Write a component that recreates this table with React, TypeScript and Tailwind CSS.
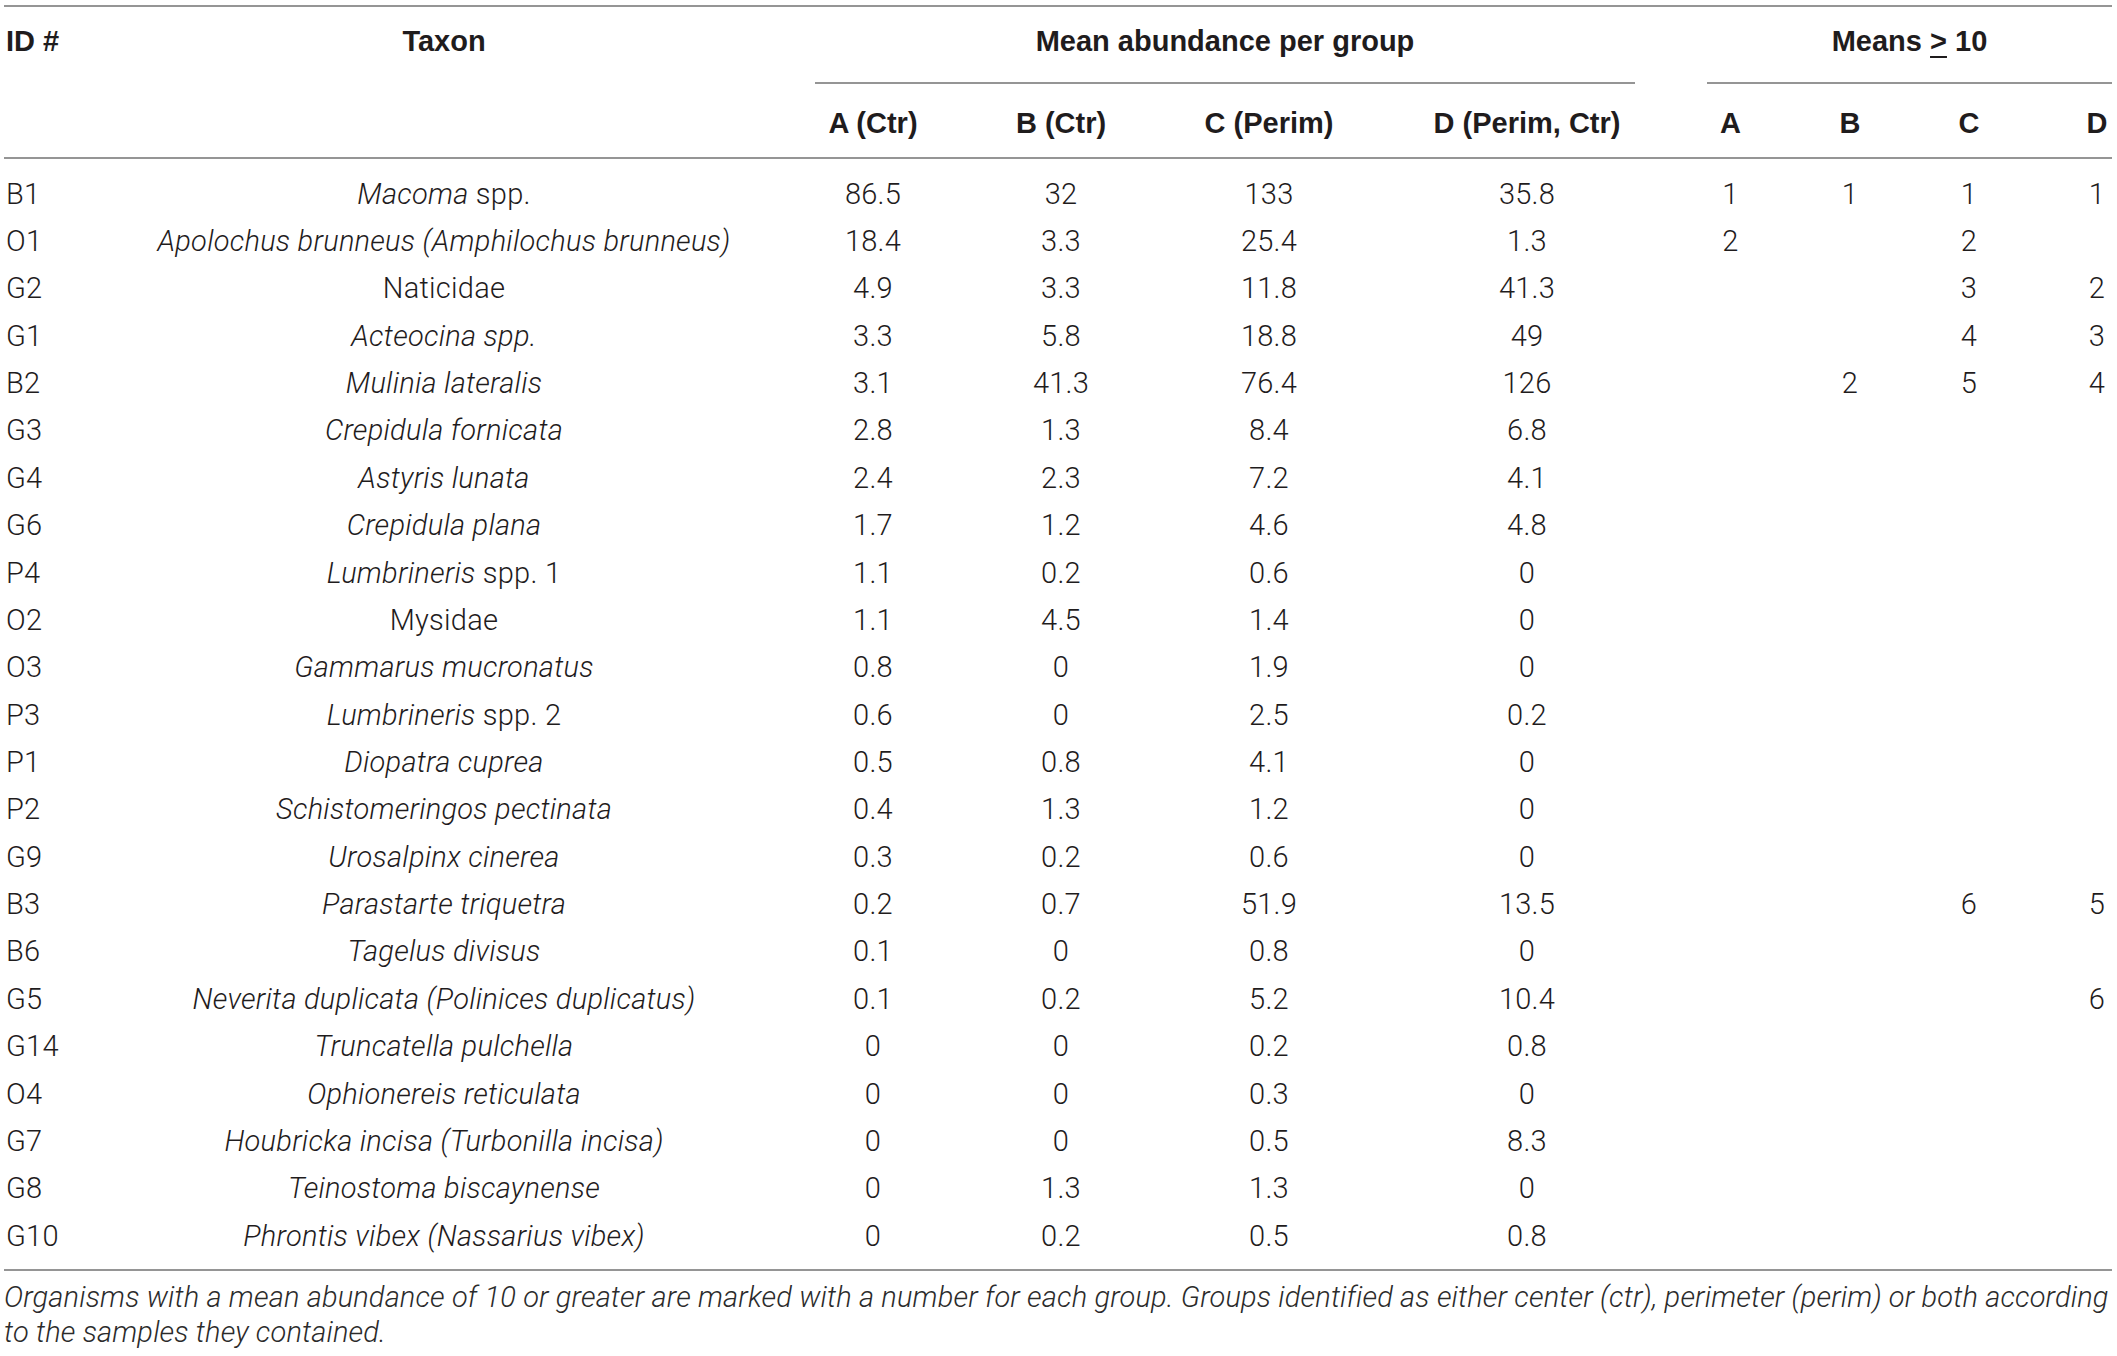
import type { ReactNode } from "react";

const grid = "grid grid-cols-[105px_670px_188px_198px_233px_273px_119px_120px_123px_79px]";

// per-column alignment, padding shifts the centre the way the table cells do
const cell = [
  "pl-[2px] text-left",
  "text-center",
  "text-center",
  "text-center pr-[10px]",
  "text-center pr-[25px]",
  "text-center pr-[15px]",
  "text-center",
  "text-center",
  "text-center pr-[5px]",
  "text-center pl-[49px]",
];

type Row = [string, ReactNode, string, string, string, string, string, string, string, string];

const I = ({ children }: { children: ReactNode }) => <span className="italic">{children}</span>;

const rows: Row[] = [
  ["B1", <><I>Macoma</I> spp.</>, "86.5", "32", "133", "35.8", "1", "1", "1", "1"],
  ["O1", <I>Apolochus brunneus (Amphilochus brunneus)</I>, "18.4", "3.3", "25.4", "1.3", "2", "", "2", ""],
  ["G2", "Naticidae", "4.9", "3.3", "11.8", "41.3", "", "", "3", "2"],
  ["G1", <I>Acteocina spp.</I>, "3.3", "5.8", "18.8", "49", "", "", "4", "3"],
  ["B2", <I>Mulinia lateralis</I>, "3.1", "41.3", "76.4", "126", "", "2", "5", "4"],
  ["G3", <I>Crepidula fornicata</I>, "2.8", "1.3", "8.4", "6.8", "", "", "", ""],
  ["G4", <I>Astyris lunata</I>, "2.4", "2.3", "7.2", "4.1", "", "", "", ""],
  ["G6", <I>Crepidula plana</I>, "1.7", "1.2", "4.6", "4.8", "", "", "", ""],
  ["P4", <><I>Lumbrineris</I> spp. 1</>, "1.1", "0.2", "0.6", "0", "", "", "", ""],
  ["O2", "Mysidae", "1.1", "4.5", "1.4", "0", "", "", "", ""],
  ["O3", <I>Gammarus mucronatus</I>, "0.8", "0", "1.9", "0", "", "", "", ""],
  ["P3", <><I>Lumbrineris</I> spp. 2</>, "0.6", "0", "2.5", "0.2", "", "", "", ""],
  ["P1", <I>Diopatra cuprea</I>, "0.5", "0.8", "4.1", "0", "", "", "", ""],
  ["P2", <I>Schistomeringos pectinata</I>, "0.4", "1.3", "1.2", "0", "", "", "", ""],
  ["G9", <I>Urosalpinx cinerea</I>, "0.3", "0.2", "0.6", "0", "", "", "", ""],
  ["B3", <I>Parastarte triquetra</I>, "0.2", "0.7", "51.9", "13.5", "", "", "6", "5"],
  ["B6", <I>Tagelus divisus</I>, "0.1", "0", "0.8", "0", "", "", "", ""],
  ["G5", <I>Neverita duplicata (Polinices duplicatus)</I>, "0.1", "0.2", "5.2", "10.4", "", "", "", "6"],
  ["G14", <I>Truncatella pulchella</I>, "0", "0", "0.2", "0.8", "", "", "", ""],
  ["O4", <I>Ophionereis reticulata</I>, "0", "0", "0.3", "0", "", "", "", ""],
  ["G7", <I>Houbricka incisa (Turbonilla incisa)</I>, "0", "0", "0.5", "8.3", "", "", "", ""],
  ["G8", <I>Teinostoma biscaynense</I>, "0", "1.3", "1.3", "0", "", "", "", ""],
  ["G10", <I>Phrontis vibex (Nassarius vibex)</I>, "0", "0.2", "0.5", "0.8", "", "", "", ""],
];

const subHeads = ["", "", "A (Ctr)", "B (Ctr)", "C (Perim)", "D (Perim, Ctr)", "A", "B", "C", "D"];

const App = () => {
  return (
    <div className="min-h-screen bg-white text-[#1f1c1d]">
      <div className="w-[2108px] ml-[4px] pt-[5px]">
        <div className="border-t-2 border-[#959595]">
          {/* header */}
          <div className="font-['Liberation_Sans',Arial,sans-serif] font-bold text-[29px] leading-[34px]">
            <div className={grid}>
              <div className={`${cell[0]} pt-[17px]`}>ID #</div>
              <div className={`${cell[1]} pt-[17px]`}>Taxon</div>
              <div className="col-span-4 pt-[17px]">
                <div className="ml-[36px] mr-[36px] pb-[24px] border-b-2 border-[#959595] text-center">
                  Mean abundance per group
                </div>
              </div>
              <div className="col-span-4 pt-[17px]">
                <div className="ml-[36px] pb-[24px] border-b-2 border-[#959595] text-center">
                  Means <span className="underline underline-offset-[5px] decoration-2">&gt;</span> 10
                </div>
              </div>
            </div>
            <div className={`${grid} pt-[22px] pb-[17px] border-b-2 border-[#959595]`}>
              {subHeads.map((h, i) => (
                <div key={i} className={cell[i]}>
                  {h}
                </div>
              ))}
            </div>
          </div>

          {/* body */}
          <div className="font-['Roboto',Arial,sans-serif] font-light text-[29px] tracking-[0.25px] pt-[11px] pb-[10px] border-b-2 border-[#959595]">
            {rows.map((r) => (
              <div key={r[0]} className={`${grid} h-[47.36px] items-center leading-[34px]`}>
                {r.map((v, i) => (
                  <div key={i} className={`${cell[i]} whitespace-nowrap`}>
                    {v}
                  </div>
                ))}
              </div>
            ))}
          </div>

          {/* footnote */}
          <div className="pt-[9px] font-['Roboto',Arial,sans-serif] font-light italic text-[29px] tracking-[0.15px] leading-[35px] text-[#2b2b2b]">
            <p className="whitespace-nowrap">
              Organisms with a mean abundance of 10 or greater are marked with a number for each group. Groups identified as either center (ctr), perimeter (perim) or both according
            </p>
            <p className="whitespace-nowrap">to the samples they contained.</p>
          </div>
        </div>
      </div>
    </div>
  );
};

export default App;
